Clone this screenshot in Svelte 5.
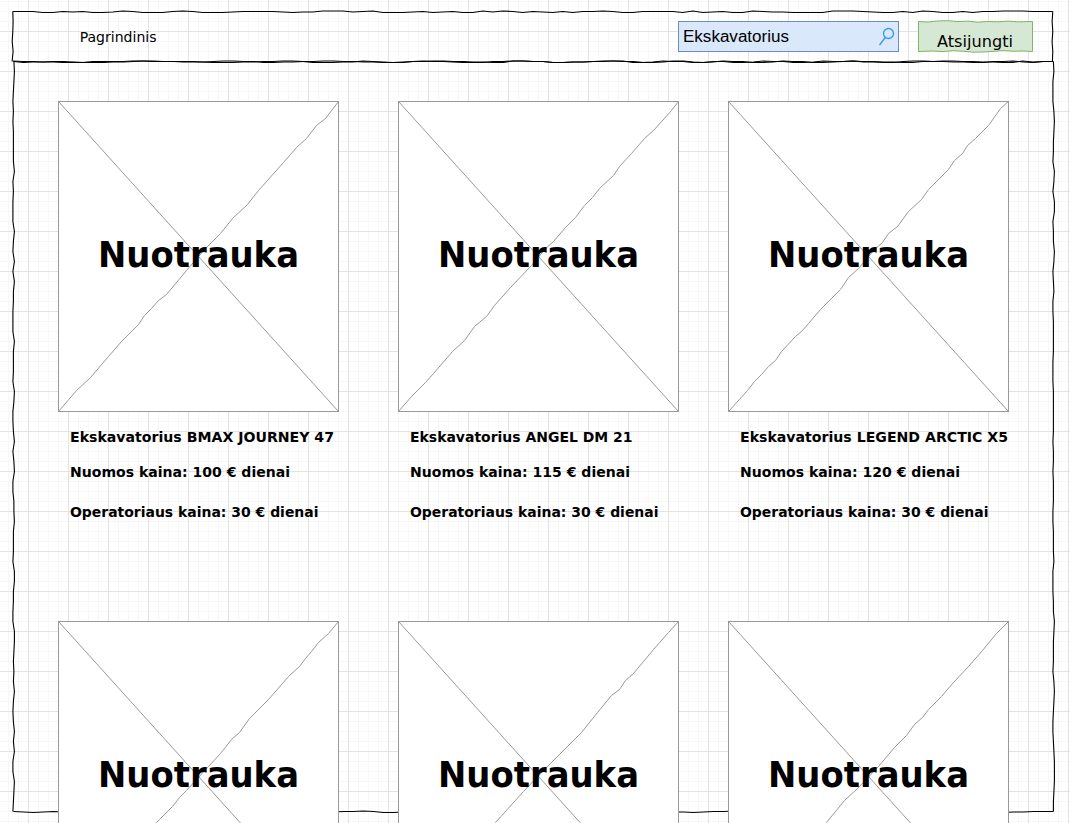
<script>
  // Each digit is a sideways nudge of the pen, one per 10px of the edge; 2 is on the line.
  const nudge = (d) => (Number(d) - 2) * 0.5;
  const across = (pattern, y, width) =>
    [...pattern].map((d, i, all) => `${(i * width) / (all.length - 1)},${y + nudge(d)}`).join(' ');
  const down = (pattern, x, height) =>
    [...pattern].map((d, i, all) => `${x + nudge(d)},${(i * height) / (all.length - 1)}`).join(' ');

  const headerTop =
    '222442324431244421244432222343311132144432432441312423424221244222' + '241432441233444411123442412442422111222';
  const headerBottom =
    '122334442222112222234443322112444331234421223444221122443322114431' + '224431224431224432122334422112233441322';
  const bodyTop =
    '243322344433211223332112244332211223344322112233441122443321122443' + '113422443122443122133442112233442213422';
  const bodyBottom = '234323122344322112233322112233433221244332211223432211224433221122' + '334322112233221122334433221122344433222';
  const bodyLeft = '3432121222241211142141422111422214311241341133422214422114432324212424114321';
  const bodyRight = '2311134322143144122431231122221112222212212221122231112243222134321123444322';

  const label = (text, width) => ({ text, width });
  const items = [
    {
      stroke: '280,0 267,17 258,24 248,37 238,46 225,61 200,89 189,103 174,117 162,132 147,147 128,169 108,193 100,199 93,207 86,214 80,223 63,240 50,255 32,276 18,289 0,310',
      lines: [label('Ekskavatorius BMAX JOURNEY 47', 264), label('Nuomos kaina: 100 € dienai', 220), label('Operatoriaus kaina: 30 € dienai', 248.5)]
    },
    {
      stroke: '280,0 273,9 255,29 246,37 233,52 221,65 215,74 201,87 194,96 186,104 177,116 167,126 155,140 147,147 133,164 112,186 96,204 88,215 76,225 66,239 54,250 35,272 27,281 13,295 0,310',
      lines: [label('Ekskavatorius ANGEL DM 21', 222.5), label('Nuomos kaina: 115 € dienai', 220), label('Operatoriaus kaina: 30 € dienai', 248.5)]
    },
    {
      stroke: '280,0 272,7 260,24 247,37 239,44 234,52 226,59 220,68 200,88 193,98 180,110 169,125 160,132 154,141 146,148 130,167 120,176 112,188 92,208 80,222 74,229 67,235 53,250 47,259 40,265 33,273 26,280 19,289 0,310',
      lines: [label('Ekskavatorius LEGEND ARCTIC X5', 268), label('Nuomos kaina: 120 € dienai', 220), label('Operatoriaus kaina: 30 € dienai', 248.5)]
    },
    {
      stroke: '280,0 270,12 260,21 253,30 247,37 241,45 230,55 210,78 191,97 181,111 173,118 162,132 150,145 128,169 121,176 114,185 98,201 0,310',
      lines: []
    },
    {
      stroke: '280,0 270,11 255,28 235,52 227,59 221,68 213,74 199,91 183,111 147,147 125,170 97,201 0,310',
      lines: []
    },
    {
      stroke: '280,0 268,12 254,29 240,45 225,61 213,75 200,88 194,96 186,103 178,114 166,126 150,145 129,167 116,179 98,201 0,310',
      lines: []
    }
  ];
</script>

<div class="page">
  <header>
    <svg class="outline" width="1041" height="51" aria-hidden="true">
      <g transform="translate(-.2 .5)">
        <polyline points={across(headerTop, 0, 1040)} />
        <polyline points={across(headerBottom, 50, 1040)} />
        <polyline points="0,0 .3,10 0,20 -.6,30 .3,40 -.7,50" />
        <polyline points="1040,0 1039.3,10 1040,20 1039.3,30 1040,40 1039.6,50" />
      </g>
    </svg>
    <nav>
      <svg class="text" width="80" height="20">
        <text x="0.7" y="15" font-size="14" textLength="76.8" lengthAdjust="spacingAndGlyphs">Pagrindinis</text>
      </svg>
    </nav>
    <div class="search">
      <svg class="query" width="110" height="20">
        <text x="0" y="15" font-size="16" textLength="106" lengthAdjust="spacingAndGlyphs">Ekskavatorius</text>
      </svg>
      <svg class="glass" width="18" height="20" viewBox="0 0 18 20" aria-hidden="true">
        <circle cx="10.5" cy="6.5" r="5" />
        <path d="M7.3 10.5 L1.5 18" />
      </svg>
    </div>
    <div class="logout">
      <svg width="117" height="33" viewBox="-1 -1 117 33">
        <path class="box" d="M.5.5 L10 1 20 0 30 -.3 40 .6 50 .2 60 1.2 70 .5 80 .8 90 .2 100 .8 114.5.5 V30.5 L105 30 95 30.2 85 29.6 75 30.4 65 31 55 31.2 45 30.2 35 29.7 25 30.6 15 30 .5 30.5Z" />
        <text x="19" y="26" font-size="16" textLength="76" lengthAdjust="spacingAndGlyphs">Atsijungti</text>
      </svg>
    </div>
  </header>

  <main>
    <svg class="outline" width="1041" height="751" aria-hidden="true">
      <g transform="translate(.4 .5)">
        <polyline points={across(bodyTop, 0, 1040)} />
        <polyline points={across(bodyBottom, 750, 1040)} />
        <polyline points={down(bodyLeft, 0, 750)} />
        <polyline points={down(bodyRight, 1040, 750)} />
      </g>
    </svg>
    {#each items as item}
      <article>
        <svg class="photo" width="281" height="311">
          <g transform="translate(.5 .5)">
            <rect width="280" height="310" />
            <path d="M0 0 L280 310" />
            <polyline points={item.stroke} />
          </g>
          <text x="40" y="166" font-size="35" textLength="201" lengthAdjust="spacingAndGlyphs">Nuotrauka</text>
        </svg>
        <div class="info">
          {#each item.lines as line}
            <svg class="text" width="280" height="20">
              <text x="0" y="15" font-size="14" textLength={line.width} lengthAdjust="spacingAndGlyphs">{line.text}</text>
            </svg>
          {/each}
        </div>
      </article>
    {/each}
  </main>
</div>

<style>
  .page {
    box-sizing: border-box;
    width: 1070px;
    height: 823px;
    padding: 11px 16px 0 13px;
    overflow: hidden;
    font-family: 'DejaVu Sans', sans-serif;
    color: #000;
    background-color: #fff;
    background-image:
      linear-gradient(90deg, #e3e3e3 1px, transparent 1px),
      linear-gradient(#e3e3e3 1px, transparent 1px),
      linear-gradient(90deg, #f7f7f7 1px, transparent 1px),
      linear-gradient(#f7f7f7 1px, transparent 1px);
    background-size: 40px 40px, 40px 40px, 10px 10px, 10px 10px;
    background-position: 28px 31px, 28px 31px, 8px 1px, 8px 1px;
  }
  svg {
    display: block;
    overflow: visible;
  }
  header {
    position: relative;
    display: flex;
    align-items: flex-start;
    height: 50px;
  }
  .outline {
    position: absolute;
    left: 0;
    top: 0;
    fill: none;
    stroke: #000;
    stroke-width: 1.1;
  }
  nav {
    width: 599px;
    padding: 16px 0 0 66px;
  }
  .search {
    position: relative;
    display: flex;
    align-items: center;
    justify-content: space-between;
    box-sizing: border-box;
    width: 221px;
    height: 31px;
    margin-top: 10px;
    padding: 0 2px 0 4px;
    border: 1px solid #6c8ebf;
    background: #dae8fc;
  }
  .query {
    font-family: 'Liberation Sans', sans-serif;
  }
  .glass {
    fill: none;
    stroke: #3399ee;
    stroke-width: 1.3;
  }
  .logout {
    position: relative;
    width: 115px;
    margin: 9px 0 0 18px;
  }
  .box {
    fill: #d5e8d4;
    stroke: #82b366;
    stroke-width: 1;
  }
  main {
    position: relative;
    display: grid;
    grid-template-columns: 340px 330px 281px;
    grid-auto-rows: 520px;
    padding: 40px 0 0 45px;
  }
  article {
    position: relative;
  }
  .photo rect {
    fill: #fff;
    stroke: #999;
  }
  .photo path,
  .photo polyline {
    fill: none;
    stroke: #999;
  }
  .photo text,
  .info text {
    font-weight: 700;
  }
  .info {
    display: flex;
    flex-direction: column;
    padding: 15px 0 0 12px;
  }
  .info svg + svg {
    margin-top: 15px;
  }
  .info svg + svg + svg {
    margin-top: 20px;
  }
</style>
